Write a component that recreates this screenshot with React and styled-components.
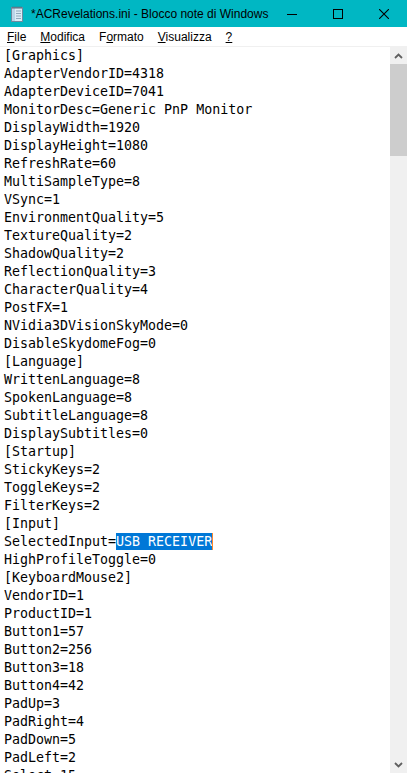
import React from 'react';
import styled, { createGlobalStyle } from 'styled-components';

const GlobalStyle = createGlobalStyle`
	html, body {
		margin: 0;
		padding: 0;
		background: #fff;
	}
`;

const lines = [
	'[Graphics]',
	'AdapterVendorID=4318',
	'AdapterDeviceID=7041',
	'MonitorDesc=Generic PnP Monitor',
	'DisplayWidth=1920',
	'DisplayHeight=1080',
	'RefreshRate=60',
	'MultiSampleType=8',
	'VSync=1',
	'EnvironmentQuality=5',
	'TextureQuality=2',
	'ShadowQuality=2',
	'ReflectionQuality=3',
	'CharacterQuality=4',
	'PostFX=1',
	'NVidia3DVisionSkyMode=0',
	'DisableSkydomeFog=0',
	'[Language]',
	'WrittenLanguage=8',
	'SpokenLanguage=8',
	'SubtitleLanguage=8',
	'DisplaySubtitles=0',
	'[Startup]',
	'StickyKeys=2',
	'ToggleKeys=2',
	'FilterKeys=2',
	'[Input]',
	{ before: 'SelectedInput=', selected: 'USB RECEIVER' },
	'HighProfileToggle=0',
	'[KeyboardMouse2]',
	'VendorID=1',
	'ProductID=1',
	'Button1=57',
	'Button2=256',
	'Button3=18',
	'Button4=42',
	'PadUp=3',
	'PadRight=4',
	'PadDown=5',
	'PadLeft=2',
	'Select=15',
];

const menus = [
	{ key: 'F', rest: 'ile' },
	{ key: 'M', rest: 'odifica' },
	{ key: 'o', pre: 'F', rest: 'rmato' },
	{ key: 'V', rest: 'isualizza' },
	{ key: '?', rest: '' },
];

const Window = styled.div`
	width: 407px;
	height: 773px;
	overflow: hidden;
	display: flex;
	flex-direction: column;
	background: #fff;
	font-family: 'Liberation Sans', Arial, sans-serif;
`;

const TitleBar = styled.div`
	height: 27px;
	flex: none;
	display: flex;
	align-items: center;
	background: #00b7c3;
	color: #000;
`;

const AppIcon = styled.svg`
	width: 16px;
	height: 16px;
	margin: 0 6px 0 9px;
	flex: none;
`;

const Title = styled.div`
	flex: 1;
	font-size: 12px;
	white-space: nowrap;
	overflow: hidden;
`;

const Controls = styled.div`
	display: flex;
	height: 100%;
`;

const ControlButton = styled.div`
	width: 46px;
	height: 100%;
	display: flex;
	align-items: center;
	justify-content: center;
`;

const MenuBar = styled.div`
	height: 19px;
	flex: none;
	display: flex;
	align-items: flex-start;
	font-size: 12px;
	color: #000;
`;

const MenuItem = styled.span`
	padding: 2px 7px 0;
	line-height: 16px;

	u {
		text-decoration: underline;
		text-underline-offset: 1px;
	}
`;

const Divider = styled.div`
	height: 1px;
	flex: none;
	background: #f0f0f0;
`;

const Body = styled.div`
	flex: 1;
	display: flex;
	min-height: 0;
`;

const Editor = styled.div`
	flex: 1;
	overflow: hidden;
	padding-left: 4px;
	font-family: 'DejaVu Sans Mono', 'Liberation Mono', monospace;
	font-size: 13.3px;
	line-height: 18px;
	color: #000;
	white-space: pre;
`;

const Line = styled.div`
	height: 18px;
`;

const Selection = styled.span`
	background: #0078d7;
	color: #fff;
	display: inline-block;
	height: 17px;
	line-height: 18px;
	vertical-align: top;
`;

const Caret = styled.span`
	display: inline-block;
	width: 1px;
	height: 17px;
	vertical-align: top;
	background: #ff8728;
`;

const Scrollbar = styled.div`
	width: 17px;
	flex: none;
	display: flex;
	flex-direction: column;
	background: #f0f0f0;
`;

const ScrollArrow = styled.div`
	height: 17px;
	flex: none;
	display: flex;
	align-items: center;
	justify-content: center;
`;

const Thumb = styled.div`
	height: 92px;
	flex: none;
	background: #cdcdcd;
`;

const Track = styled.div`
	flex: 1;
`;

const Chevron = ({ down }) => (
	<svg width="9" height="6" viewBox="0 0 9 6">
		<path
			d={down ? 'M1 1 L4.5 4.5 L8 1' : 'M1 5 L4.5 1.5 L8 5'}
			fill="none"
			stroke="#606060"
			strokeWidth="1.8"
		/>
	</svg>
);

export default function App() {
	return (
		<>
			<GlobalStyle />
			<Window>
				<TitleBar>
					<AppIcon viewBox="0 0 16 16">
						<rect x="2.5" y="1.5" width="11" height="14" fill="#dcebf5" stroke="#6d8aa0" />
						<rect x="3" y="2" width="3" height="13" fill="#b9d4e8" />
						<line x1="7" y1="5" x2="12" y2="5" stroke="#8fa9bd" />
						<line x1="7" y1="7.5" x2="12" y2="7.5" stroke="#8fa9bd" />
						<line x1="7" y1="10" x2="12" y2="10" stroke="#8fa9bd" />
						<line x1="7" y1="12.5" x2="12" y2="12.5" stroke="#8fa9bd" />
						<path d="M4 0.5v2.5M6 0.5v2.5M8 0.5v2.5M10 0.5v2.5M12 0.5v2.5" stroke="#5a6b78" />
					</AppIcon>
					<Title>*ACRevelations.ini - Blocco note di Windows</Title>
					<Controls>
						<ControlButton>
							<svg width="10" height="10" viewBox="0 0 10 10">
								<line x1="0" y1="5.5" x2="10" y2="5.5" stroke="#000" />
							</svg>
						</ControlButton>
						<ControlButton>
							<svg width="10" height="10" viewBox="0 0 10 10">
								<rect x="0.5" y="0.5" width="9" height="9" fill="none" stroke="#000" />
							</svg>
						</ControlButton>
						<ControlButton>
							<svg width="10" height="10" viewBox="0 0 10 10">
								<path d="M0 0 L10 10 M10 0 L0 10" stroke="#000" strokeWidth="1.1" />
							</svg>
						</ControlButton>
					</Controls>
				</TitleBar>
				<MenuBar>
					{menus.map((m) => (
						<MenuItem key={m.key + m.rest}>
							{m.pre}
							<u>{m.key}</u>
							{m.rest}
						</MenuItem>
					))}
				</MenuBar>
				<Divider />
				<Body>
					<Editor>
						{lines.map((l, i) =>
							typeof l === 'string' ? (
								<Line key={i}>{l}</Line>
							) : (
								<Line key={i}>
									{l.before}
									<Selection>{l.selected}</Selection>
									<Caret />
								</Line>
							)
						)}
					</Editor>
					<Scrollbar>
						<ScrollArrow>
							<Chevron />
						</ScrollArrow>
						<Thumb />
						<Track />
						<ScrollArrow>
							<Chevron down />
						</ScrollArrow>
					</Scrollbar>
				</Body>
			</Window>
		</>
	);
}
